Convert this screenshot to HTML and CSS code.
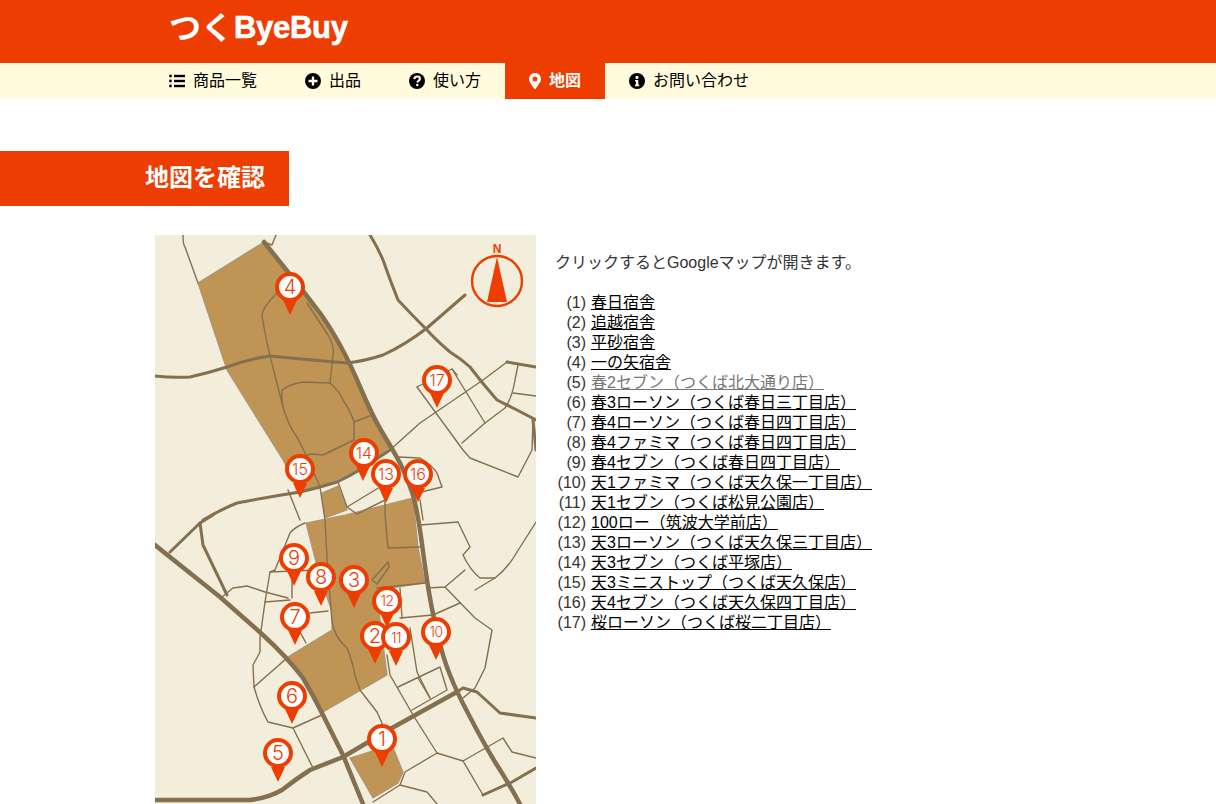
FILE: index.html
```html
<!DOCTYPE html>
<html lang="ja">
<head>
<meta charset="utf-8">
<title>つくByeBuy 地図</title>
<link rel="stylesheet" href="styles.css">
</head>
<body>
<header class="site-header"><a class="logo" href="#"><span class="logo-kana">つく</span><span class="logo-latin">ByeBuy</span></a></header>
<nav class="nav">
  <a class="nav-item" href="#"><svg class="ic" viewBox="0 0 16 16"><circle cx="1.5" cy="3" r="1.4"/><circle cx="1.5" cy="8" r="1.4"/><circle cx="1.5" cy="13" r="1.4"/><rect x="5" y="1.8" width="11" height="2.4"/><rect x="5" y="6.8" width="11" height="2.4"/><rect x="5" y="11.8" width="11" height="2.4"/></svg>商品一覧</a>
  <a class="nav-item" href="#"><svg class="ic" viewBox="0 0 16 16"><path fill-rule="evenodd" d="M8 0a8 8 0 1 0 0 16A8 8 0 0 0 8 0zM6.800 3.500h2.400v3.300h3.300v2.400H9.200v3.300H6.800V9.200H3.500V6.800h3.300z"/></svg>出品</a>
  <a class="nav-item" href="#"><svg class="ic" viewBox="0 0 16 16"><circle cx="8" cy="8" r="8"/><path class="ic-cut" d="M5.300 6.100C5.400 4.500 6.600 3.500 8.200 3.500c1.500 0 2.700 1 2.700 2.300 0 2-2.500 2-2.500 3.600"/><circle class="ic-dot" cx="8.300" cy="12" r="1.300"/></svg>使い方</a>
  <a class="nav-item is-active" href="#"><svg class="ic ic-pin" viewBox="0 0 12 16"><path fill-rule="evenodd" d="M6 0C2.700 0 0 2.700 0 6c0 2.400.8 3.100 5.200 9.600a1 1 0 0 0 1.600 0C11.200 9.100 12 8.400 12 6c0-3.300-2.700-6-6-6zm0 8.500a2.500 2.500 0 1 1 0-5 2.500 2.500 0 0 1 0 5z"/></svg>地図</a>
  <a class="nav-item" href="#"><svg class="ic" viewBox="0 0 16 16"><path fill-rule="evenodd" d="M8 0a8 8 0 1 0 0 16A8 8 0 0 0 8 0zM8 2.800a1.600 1.600 0 1 1 0 3.200 1.600 1.600 0 0 1 0-3.200zM6 7h3.300v4.600h.9v1.600H6v-1.600h.9V8.600H6z"/></svg>お問い合わせ</a>
</nav>
<h1 class="page-title">地図を確認</h1>
<main class="content">
  <svg class="map" viewBox="155 235 381 569" width="381" height="569">
    <rect x="155" y="235" width="381" height="569" class="land"/>
    <g class="block">
      <path d="M198 283L264 242L310 300L330 327L350 363L372 415L390 447L363 468L330 483L300 492L283 460L227 370Z"/>
      <path d="M322 493L338 486L347 510L325 518Z"/>
      <path d="M306 523L345 515L413 498L418 547L425 583L377 590L380 620L387 675L323 712L288 657L332 630L332 612L318 570Z"/>
      <path d="M350 758L392 745L403 772L398 783L373 798Z"/>
    </g>
    <g class="road-thin">
      <path d="M183 235Q183 245 185 247L198 283"/><path d="M264 242L272 245L276 235"/>
      <path d="M277 293Q262 308 262 316Q265 335 270 356L283 407Q288 425 297 437L307 457L320 487L325 520L327 558L332 622Q335 638 347 648Q352 660 355 675L360 690L377 712L393 748"/>
      <path d="M307 303L328 335Q335 347 333 355L330 383L303 382Q290 384 282 390Q281 398 283 407"/>
      <path d="M330 383Q340 392 343 400Q351 412 354 422L354 440L323 455L310 454L303 457"/><path d="M354 422L372 415"/>
      <path d="M417 387L452 369L457 375"/><path d="M417 387L463 450L470 458L518 477L532 450L533 420"/>
      <path d="M452 369L485 423"/><path d="M462 443L485 423L505 408Q512 398 515 380L518 365"/><path d="M513 393L536 396"/>
      <path d="M398 457L420 458Q432 465 437 473L442 487L417 493"/>
      <path d="M338 482L347 507L357 514L385 500"/><path d="M347 507L380 487L385 500L385 515L388 548L420 547"/>
      <path d="M388 562L372 580L377 584L389 567Z"/>
      <path d="M288 490L300 520"/><path d="M420 500L423 520"/>
      <path d="M305 523Q295 527 290 533L275 570L270 572L265 602L260 638L260 652L253 665L254 687Q260 708 268 722L293 728L322 715"/>
      <path d="M270 572L317 570"/><path d="M265 602L290 600"/><path d="M292 570L292 598"/>
      <path d="M222 597L233 588L247 586L265 592L288 598"/><path d="M310 613L328 611"/><path d="M254 687L287 658"/><path d="M293 728L313 768"/>
      <path d="M420 525L458 522L470 547L463 555Q470 570 480 578L495 578Q508 568 517 552L536 522"/>
      <path d="M475 590L495 578"/><path d="M465 570L445 587L427 588"/>
      <path d="M445 587L475 618L492 630L485 668L475 688L463 698"/>
      <path d="M377 588L425 583"/><path d="M400 618L433 615L460 603"/><path d="M400 588L402 618"/>
      <path d="M410 628L417 672L430 698"/>
      <path d="M387 655L390 675L413 715L437 753L463 761L503 738L512 752L536 758"/>
      <path d="M398 687L440 667L447 690L412 710"/><path d="M418 678L430 698"/>
      <path d="M463 761L483 795"/><path d="M437 753L405 772L400 785L427 792L437 804"/><path d="M373 802L400 785"/>
      <path d="M483 380L420 423L390 450"/><path d="M483 380L507 362"/>
      <path d="M300 632L306 643"/>
    </g>
    <g class="road-mid">
      <path d="M203 520Q220 510 237 503Q268 497 300 492Q318 488 337 482Q350 476 363 468L390 450"/>
      <path d="M170 552L200 523L213 515"/><path d="M200 523L203 545L227 595"/>
      <path d="M370 235Q378 248 383 260Q390 280 398 300Q412 315 427 330Q435 339 450 352Q460 358 470 367Q482 383 497 400Q507 405 517 410L536 420"/>
      <path d="M155 376Q172 378 190 377Q208 373 227 367Q248 359 270 356Q310 360 347 363Q365 361 383 355Q405 345 427 328L465 295"/>
      <path d="M507 362L536 367"/><path d="M533 420L536 450"/>
      <path d="M455 693L463 688L477 692L500 713L536 718"/>
      <path d="M483 795L512 782L536 768"/>
    </g>
    <g class="road-thick">
      <path d="M264 242L300 287Q310 300 320 313Q330 327 340 345Q350 363 361 389Q372 415 382 432Q393 450 400 463Q407 477 412 492Q417 507 422 544Q427 582 430 598Q433 615 438 636Q443 658 450 675Q457 693 470 717Q483 742 495 762Q508 782 520 804"/>
      <path d="M155 545L220 597L263 635Q287 657 303 678Q313 695 323 715L343 755L363 804"/>
      <path d="M155 800L250 800Q268 798 282 790Q296 779 310 770L343 757L392 728L455 693"/>
    </g>
    <g class="compass">
      <circle cx="497" cy="281" r="25"/>
      <path d="M497 257L507 302H487Z"/>
      <text x="497" y="253" class="compass-n">N</text>
    </g>
    <g class="pin"><path d="M283 300H297L290 315Z"/><circle cx="290" cy="287" r="13"/><text x="290" y="294" class="pin-n">4</text></g>
    <g class="pin"><path d="M430 393H444L437 408Z"/><circle cx="437" cy="380" r="13"/><text x="437" y="386" class="pin-n pin-nn">17</text></g>
    <g class="pin"><path d="M356 466H370L363 481Z"/><circle cx="364" cy="453" r="13"/><text x="364" y="459" class="pin-n pin-nn">14</text></g>
    <g class="pin"><path d="M293 483H307L300 498Z"/><circle cx="300" cy="469" r="13"/><text x="300" y="475" class="pin-n pin-nn">15</text></g>
    <g class="pin"><path d="M411 488H425L418 502Z"/><circle cx="418" cy="474" r="13"/><text x="418" y="480" class="pin-n pin-nn">16</text></g>
    <g class="pin"><path d="M379 488H393L386 503Z"/><circle cx="386" cy="474" r="13"/><text x="386" y="480" class="pin-n pin-nn">13</text></g>
    <g class="pin"><path d="M287 571H301L294 586Z"/><circle cx="294" cy="558" r="13"/><text x="294" y="565" class="pin-n">9</text></g>
    <g class="pin"><path d="M314 591H328L321 606Z"/><circle cx="321" cy="577" r="13"/><text x="321" y="584" class="pin-n">8</text></g>
    <g class="pin"><path d="M347 593H361L354 608Z"/><circle cx="354" cy="580" r="13"/><text x="354" y="587" class="pin-n">3</text></g>
    <g class="pin"><path d="M288 630H302L295 645Z"/><circle cx="295" cy="617" r="13"/><text x="295" y="624" class="pin-n">7</text></g>
    <g class="pin"><path d="M368 649H382L375 664Z"/><circle cx="375" cy="636" r="13"/><text x="375" y="643" class="pin-n">2</text></g>
    <g class="pin"><path d="M380 613H394L387 628Z"/><circle cx="387" cy="601" r="13"/><text x="387" y="606" class="pin-n pin-ns">12</text></g>
    <g class="pin"><path d="M389 651H403L396 666Z"/><circle cx="396" cy="637" r="13"/><text x="396" y="643" class="pin-n pin-ns">11</text></g>
    <g class="pin"><path d="M429 645H443L436 660Z"/><circle cx="436" cy="632" r="13"/><text x="436" y="637" class="pin-n pin-ns">10</text></g>
    <g class="pin"><path d="M285 709H299L292 724Z"/><circle cx="292" cy="696" r="13"/><text x="292" y="703" class="pin-n">6</text></g>
    <g class="pin"><path d="M375 752H389L382 767Z"/><circle cx="382" cy="739" r="13"/><text x="382" y="746" class="pin-n">1</text></g>
    <g class="pin"><path d="M271 767H285L278 782Z"/><circle cx="278" cy="753" r="13"/><text x="278" y="760" class="pin-n">5</text></g>
  </svg>
  <section class="side">
    <p class="intro">クリックするとGoogleマップが開きます。</p>
    <ul class="places">
      <li><span class="num">(1)</span><a href="#">春日宿舎</a></li>
      <li><span class="num">(2)</span><a href="#">追越宿舎</a></li>
      <li><span class="num">(3)</span><a href="#">平砂宿舎</a></li>
      <li><span class="num">(4)</span><a href="#">一の矢宿舎</a></li>
      <li><span class="num">(5)</span><a href="#" class="visited">春2セブン（つくば北大通り店）</a></li>
      <li><span class="num">(6)</span><a href="#">春3ローソン（つくば春日三丁目店）</a></li>
      <li><span class="num">(7)</span><a href="#">春4ローソン（つくば春日四丁目店）</a></li>
      <li><span class="num">(8)</span><a href="#">春4ファミマ（つくば春日四丁目店）</a></li>
      <li><span class="num">(9)</span><a href="#">春4セブン（つくば春日四丁目店）</a></li>
      <li><span class="num">(10)</span><a href="#">天1ファミマ（つくば天久保一丁目店）</a></li>
      <li><span class="num">(11)</span><a href="#">天1セブン（つくば松見公園店）</a></li>
      <li><span class="num">(12)</span><a href="#">100ロー（筑波大学前店）</a></li>
      <li><span class="num">(13)</span><a href="#">天3ローソン（つくば天久保三丁目店）</a></li>
      <li><span class="num">(14)</span><a href="#">天3セブン（つくば平塚店）</a></li>
      <li><span class="num">(15)</span><a href="#">天3ミニストップ（つくば天久保店）</a></li>
      <li><span class="num">(16)</span><a href="#">天4セブン（つくば天久保四丁目店）</a></li>
      <li><span class="num">(17)</span><a href="#">桜ローソン（つくば桜二丁目店）</a></li>
    </ul>
  </section>
</main>
</body>
</html>
```
FILE: styles.css
```css
* { box-sizing: border-box; }
html, body { margin: 0; padding: 0; overflow: hidden; }
body {
  height: 804px;
  background: #fff;
  color: #333;
  font-family: "Liberation Sans", "Noto Sans CJK JP", sans-serif;
  font-size: 16px;
  line-height: 20px;
}
.site-header {
  height: 63px;
  background: #ed3d00;
  padding: 8px 0 0 169px;
}
.logo {
  display: flex;
  align-items: center;
  height: 40px;
  color: #fff;
  text-decoration: none;
  font-weight: bold;
  white-space: nowrap;
}
.logo-kana { font-size: 32px; width: 65px; flex: none; }
.logo-latin { font-size: 31px; letter-spacing: -.3px; -webkit-text-stroke: .6px #fff; }
.nav {
  display: flex;
  height: 36px;
  padding-left: 145px;
  background: #fffbdc;
}
.nav-item {
  display: flex;
  align-items: center;
  gap: 8px;
  padding: 0 24px;
  color: #000;
  text-decoration: none;
}
.ic { width: 16px; height: 16px; fill: #000; flex: none; }
.ic-pin { width: 12px; fill: #fff; }
.ic-cut { fill: none; stroke: #fffbdc; stroke-width: 2.2; }
.ic-dot { fill: #fffbdc; }
.is-active { background: #ed3d00; color: #fff; font-weight: bold; }
.page-title {
  width: 289px;
  height: 55px;
  margin: 52px 0 29px;
  padding-left: 145px;
  background: #ed3d00;
  color: #fff;
  font-size: 24px;
  line-height: 53px;
  font-weight: bold;
}
.content {
  display: flex;
  gap: 19px;
  padding-left: 155px;
}
.map { display: block; flex: none; }
.land { fill: #f3eedb; }
.block path { fill: #bf9454; stroke: #a8977a; stroke-width: 1.2; }
.road-thin path, .road-mid path, .road-thick path {
  fill: none;
  stroke: #84704f;
  stroke-linejoin: round;
  stroke-linecap: round;
}
.road-thin path { stroke-width: 1.4; }
.road-mid path { stroke-width: 3; }
.road-thick path { stroke-width: 4.5; }
.compass circle { fill: none; stroke: #ed3d00; stroke-width: 2.4; }
.compass path { fill: #ed3d00; }
.compass-n {
  fill: #ed3d00;
  font-size: 12px;
  font-weight: bold;
  text-anchor: middle;
}
.pin path { fill: #ed3d00; }
.pin circle { fill: #fff; stroke: #ed3d00; stroke-width: 4; }
.pin-n {
  fill: #ed3d00;
  font-family: Inter, "Liberation Sans", sans-serif;
  font-weight: 300;
  font-size: 20px;
  text-anchor: middle;
}
.pin-nn { font-size: 16px; }
.pin-ns { font-size: 14px; letter-spacing: -.5px; }
.side { padding-top: 18px; }
.intro { margin: 0 0 20px; }
.places { margin: 0; padding: 0; list-style: none; }
.places li { display: flex; gap: 5px; height: 20px; }
.num { width: 31px; text-align: right; }
.places a { color: #000; text-underline-offset: 1px; }
.places a.visited { color: #777; }
```
